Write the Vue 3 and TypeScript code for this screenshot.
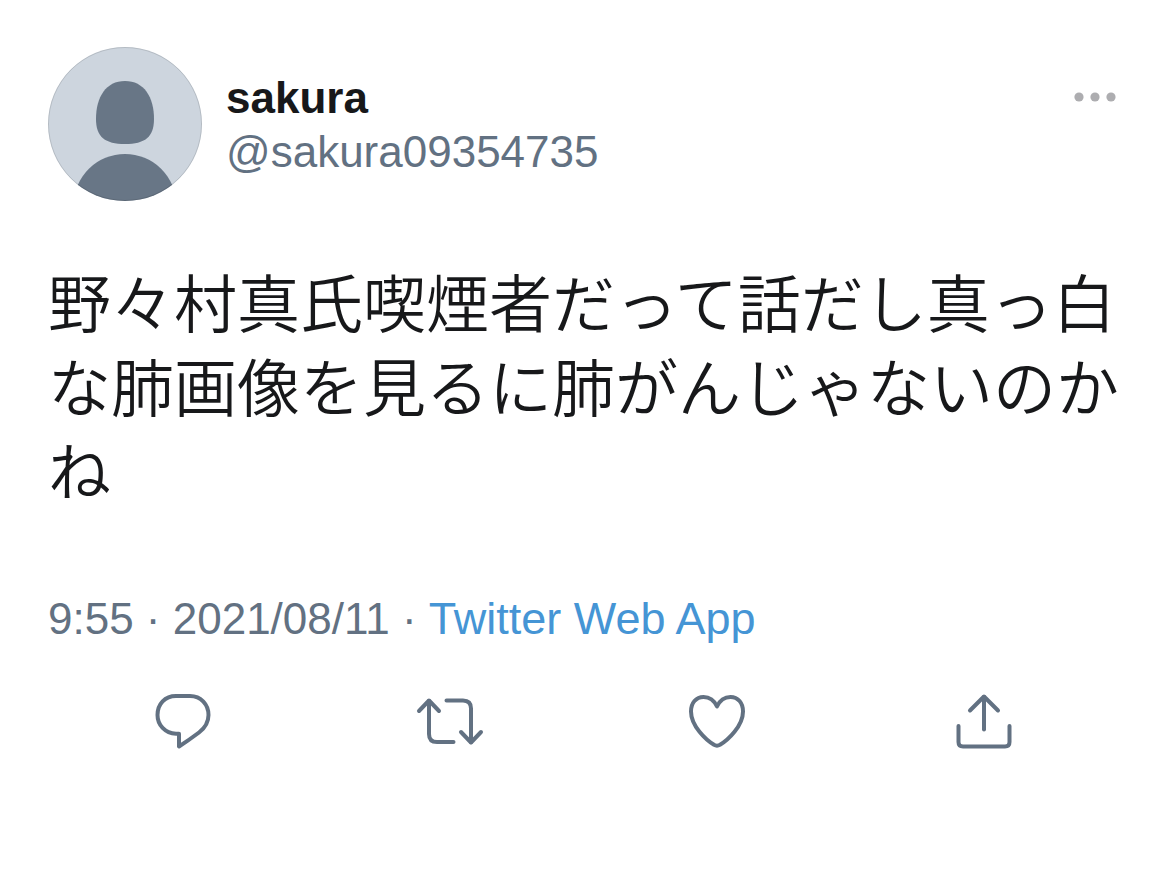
<script setup lang="ts">
interface Action {
  label: string
  viewBox: string
  paths: string[]
}

const actions: Action[] = [
  {
    label: '返信',
    viewBox: '0 0 90 80',
    paths: [
      'M36 16H50C61 16 68.5 24.5 68.5 35C68.5 42.5 65.5 47.5 59 52.5C53 57 46 62 39 66.5V53.8H36C25 53.3 17.5 45 17.5 35C17.5 24 25 16 36 16Z',
    ],
  },
  {
    label: 'リツイート',
    viewBox: '2 0 90 80',
    paths: ['M14 31L24 20.5L34 31', 'M24 21V54Q24 62 32 62H48.5', 'M41.5 20.5H58Q66 20.5 66 28.5V62', 'M56 52L66 62.5L76 52'],
  },
  {
    label: 'いいね',
    viewBox: '-1 0 90 80',
    paths: [
      'M42 26.5C39 20 34 17 28.5 17C21 17 16 23 16 31.5C16 46 31 60 39 64.8Q42 66.5 45 64.8C53 60 68 46 68 31.5C68 23 63 17 55.5 17C50 17 45 20 42 26.5Z',
    ],
  },
  {
    label: '共有',
    viewBox: '1 0 90 80',
    paths: ['M30 30.5L44 16.5L58 30.5', 'M44 17V49.5', 'M18.5 46V62Q18.5 66.5 23 66.5H65Q69.5 66.5 69.5 62V46'],
  },
]
</script>

<template>
  <article class="tweet">
    <header class="head">
      <svg class="avatar" viewBox="0 0 154 154" role="img" aria-label="sakura">
        <defs>
          <clipPath id="avatar-clip"><circle cx="77" cy="77" r="77" /></clipPath>
        </defs>
        <g clip-path="url(#avatar-clip)">
          <rect width="154" height="154" fill="#cdd5de" />
          <path
            d="M77 34C96 34 106 50 106 72C106 90 97 97 77 97C57 97 48 90 48 72C48 50 58 34 77 34Z"
            fill="#687686"
          />
          <ellipse cx="77" cy="157" rx="51" ry="50" fill="#687686" />
        </g>
        <circle cx="77" cy="77" r="76.5" fill="none" stroke="#000" stroke-opacity="0.12" />
      </svg>
      <div class="names">
        <strong class="name">sakura</strong>
        <span class="handle">@sakura09354735</span>
      </div>
      <button class="more" type="button" aria-label="もっと見る">
        <svg viewBox="0 0 42 10" width="42" height="10" fill="#adadb0">
          <circle cx="5" cy="5" r="4.6" />
          <circle cx="21" cy="5" r="4.6" />
          <circle cx="37" cy="5" r="4.6" />
        </svg>
      </button>
    </header>

    <p class="body" lang="ja">野々村真氏喫煙者だって話だし真っ白な肺画像を見るに肺がんじゃないのかね</p>

    <p class="meta"><time datetime="2021-08-11T09:55">9:55 · 2021/08/11</time> · <a href="#">Twitter Web App</a></p>

    <footer class="actions">
      <button v-for="action in actions" :key="action.label" type="button" :aria-label="action.label">
        <svg :viewBox="action.viewBox" width="90" height="80">
          <path v-for="d in action.paths" :key="d" :d="d" />
        </svg>
      </button>
    </footer>
  </article>
</template>

<style>
body {
  margin: 0;
  background: #fff;
}
</style>

<style scoped>
.tweet {
  padding: 47px 48px;
  font-family: "Liberation Sans", "Noto Sans CJK JP", sans-serif;
  font-size: 44px;
  color: #17181a;
}

.head {
  display: flex;
  align-items: flex-start;
}

.avatar {
  width: 154px;
  height: 154px;
  flex: none;
}

.names {
  display: flex;
  flex-direction: column;
  flex: 1;
  margin: 24px 0 0 24px;
  line-height: 54px;
}

.name {
  font-weight: 700;
}

.handle {
  color: #627182;
}

button {
  padding: 0;
  border: 0;
  background: none;
  cursor: pointer;
}

.more {
  display: flex;
  margin: 45px 6px 0 0;
}

.body {
  margin: 57px -3px 0 0;
  font-family: "Noto Sans CJK JP", sans-serif;
  font-size: 63px;
  font-weight: 350;
  line-height: 84px;
  line-break: anywhere;
}

.meta {
  margin: 79px 0 0;
  line-height: 60px;
  color: #627182;
}

.meta a {
  color: #4595d5;
  font-size: 45px;
  text-decoration: none;
}

.actions {
  display: grid;
  grid-template-columns: repeat(4, 1fr);
  margin-top: 31px;
  padding: 0 3px;
}

.actions button {
  display: flex;
  justify-content: center;
}

.actions path {
  fill: none;
  stroke: #627182;
  stroke-width: 4;
  stroke-linecap: round;
  stroke-linejoin: round;
}
</style>
